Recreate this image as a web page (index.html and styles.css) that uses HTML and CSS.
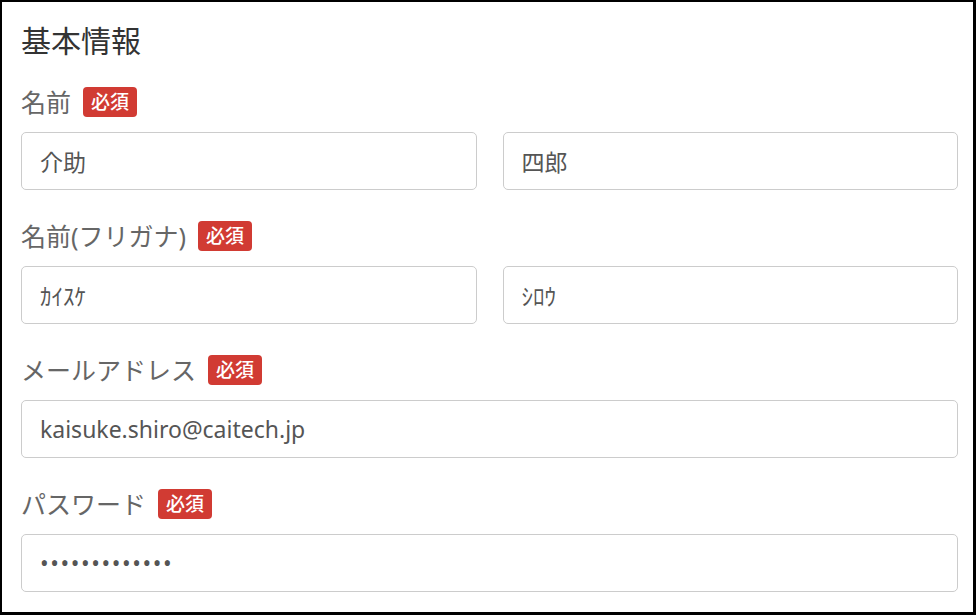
FILE: index.html
```html
<!DOCTYPE html>
<html lang="ja">
<head>
    <meta charset="UTF-8">
    <title>基本情報</title>
    <link rel="stylesheet" href="styles.css">
</head>
<body>
<div class="frame">
    <h2 class="title">基本情報</h2>

    <div class="group">
        <div class="label-row">
            <label class="label">名前</label>
            <span class="badge">必須</span>
        </div>
        <div class="pair">
            <input class="field" type="text" value="介助">
            <input class="field" type="text" value="四郎">
        </div>
    </div>

    <div class="group">
        <div class="label-row">
            <label class="label">名前(フリガナ)</label>
            <span class="badge">必須</span>
        </div>
        <div class="pair">
            <input class="field" type="text" value="ｶｲｽｹ">
            <input class="field" type="text" value="ｼﾛｳ">
        </div>
    </div>

    <div class="group">
        <div class="label-row">
            <label class="label">メールアドレス</label>
            <span class="badge">必須</span>
        </div>
        <input class="field" type="text" value="kaisuke.shiro@caitech.jp">
    </div>

    <div class="group">
        <div class="label-row">
            <label class="label">パスワード</label>
            <span class="badge">必須</span>
        </div>
        <input class="field pass" type="password" value="kaisukeshiro1">
    </div>
</div>
</body>
</html>
```

FILE: styles.css
```css
html, body {
    margin: 0;
    padding: 0;
    background: #ffffff;
}
body {
    font-family: "Noto Sans", "Noto Sans CJK JP", sans-serif;
}
.frame {
    box-sizing: border-box;
    width: 976px;
    height: 615px;
    border-style: solid;
    border-color: #000000;
    border-width: 2px 3px 3px 2px;
    padding: 21px 15px 0 19px;
    overflow: hidden;
}
.title {
    margin: 0 0 28px 0;
    font-size: 30px;
    line-height: 36px;
    font-weight: normal;
    color: #333333;
}
.group {
    margin-bottom: 31px;
}
.label-row {
    display: flex;
    align-items: center;
    height: 30px;
    margin-bottom: 15px;
}
.label {
    font-size: 25px;
    line-height: 30px;
    color: #666666;
}
.badge {
    margin-left: 12px;
    height: 30px;
    line-height: 30px;
    padding: 0 8px;
    border-radius: 4px;
    background-color: #d13b33;
    color: #ffffff;
    font-size: 19px;
    font-weight: 500;
}
.pair {
    display: flex;
    gap: 26px;
}
.field {
    box-sizing: border-box;
    display: block;
    width: 100%;
    height: 58px;
    margin: 0;
    padding: 0 18px;
    border: 1px solid #cccccc;
    border-radius: 5px;
    background: #ffffff;
    font-family: "Noto Sans", "Noto Sans CJK JP", sans-serif;
    font-size: 23px;
    color: #555555;
    outline: none;
}
.pass {
    letter-spacing: 1.6px;
}
```
